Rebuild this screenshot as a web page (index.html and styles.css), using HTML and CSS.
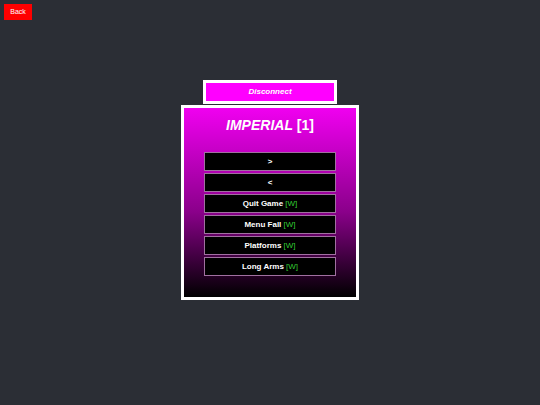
FILE: index.html
```html
<!DOCTYPE html>
<html>
<head>
<meta charset="utf-8">
<link rel="stylesheet" href="styles.css">
</head>
<body>
<div class="page">
  <button class="back">Back</button>
  <div class="stage">
    <div class="disconnect">Disconnect</div>
    <div class="panel">
      <div class="title"><span class="name">IMPERIAL</span> <span class="num">[1]</span></div>
      <div class="list">
        <div class="item">&gt;</div>
        <div class="item">&lt;</div>
        <div class="item">Quit Game <span class="tag">[W]</span></div>
        <div class="item">Menu Fall <span class="tag">[W]</span></div>
        <div class="item">Platforms <span class="tag">[W]</span></div>
        <div class="item">Long Arms <span class="tag">[W]</span></div>
      </div>
    </div>
  </div>
</div>
</body>
</html>
```
FILE: styles.css
```css
html, body {
  margin: 0;
  padding: 0;
  background: #2b2e35;
  font-family: "Liberation Sans", Arial, sans-serif;
}
.page {
  width: 540px;
  height: 405px;
  box-sizing: border-box;
  padding: 4px;
  display: flex;
  flex-direction: column;
  align-items: flex-start;
}
.back {
  width: 28px;
  height: 16px;
  margin: 0;
  padding: 0;
  border: none;
  background: #ff0000;
  color: #ffffff;
  font-family: "Liberation Sans", Arial, sans-serif;
  font-size: 7px;
  line-height: 16px;
}
.stage {
  align-self: stretch;
  margin-top: 60px;
  margin-left: -4px;
  margin-right: -4px;
  display: flex;
  flex-direction: column;
  align-items: center;
}
.disconnect {
  width: 128px;
  height: 18px;
  border: 3px solid #ffffff;
  background: #ff00ff;
  color: #ffffff;
  font-size: 8px;
  font-weight: bold;
  font-style: italic;
  line-height: 18px;
  text-align: center;
}
.panel {
  margin-top: 1px;
  width: 172px;
  height: 189px;
  border: 3px solid #ffffff;
  background: linear-gradient(to bottom, #f000f0 0%, #8a008a 55%, #000000 100%);
  box-sizing: content-box;
  display: flex;
  flex-direction: column;
  align-items: center;
}
.title {
  margin-top: 9px;
  line-height: 16px;
  font-size: 14px;
  color: #ffffff;
  font-weight: bold;
}
.name {
  font-style: italic;
}
.list {
  margin-top: 19px;
  display: flex;
  flex-direction: column;
  gap: 2px;
}
.item {
  width: 130px;
  height: 17px;
  border: 1px solid #a070a0;
  background: #000000;
  color: #ffffff;
  font-size: 8px;
  font-weight: bold;
  line-height: 17px;
  text-align: center;
}
.tag {
  color: #33cc33;
  font-weight: normal;
}
```
